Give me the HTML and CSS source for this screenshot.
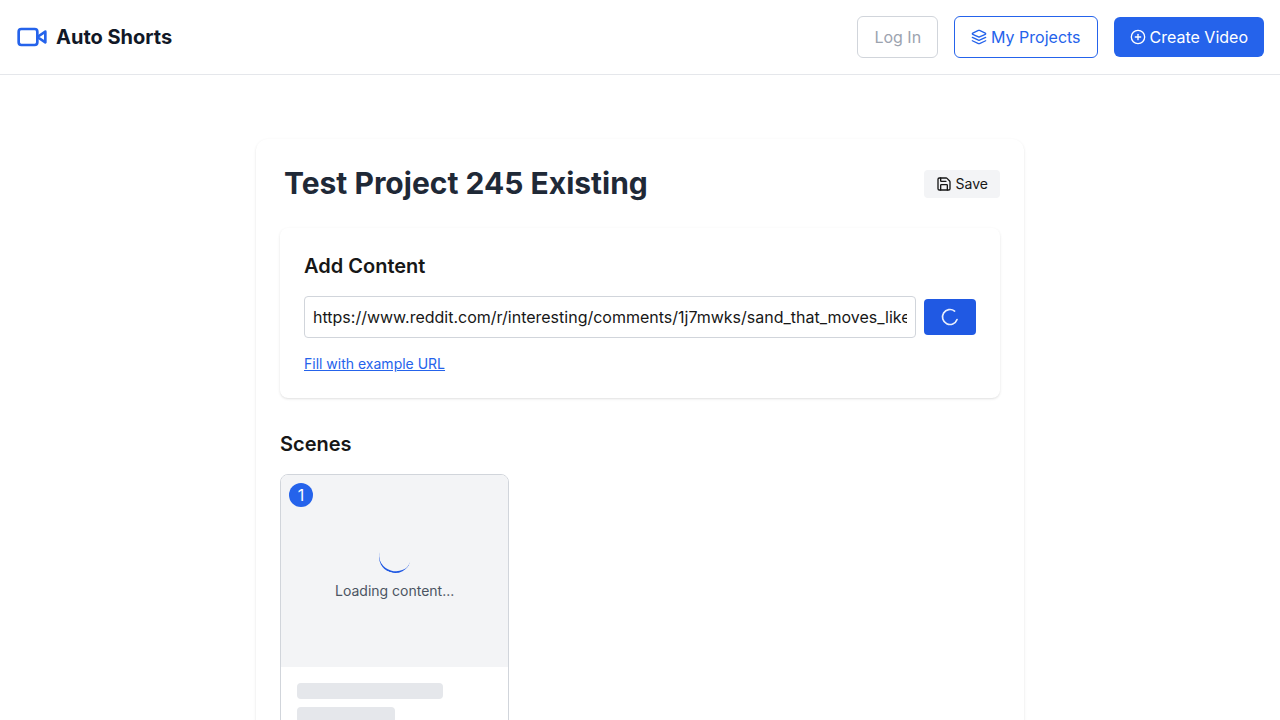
FILE: index.html
```html
<!DOCTYPE html>
<html lang="en">
<head>
<meta charset="utf-8">
<meta name="viewport" content="width=device-width, initial-scale=1">
<title>Auto Shorts</title>
<link rel="stylesheet" href="styles.css">
</head>
<body>
<header class="topbar">
  <a class="brand" href="#">
    <svg class="brand-icon" viewBox="0 0 24 24" aria-hidden="true"><path d="m22 8-6 4 6 4V8Z"/><rect x="2" y="6" width="14" height="12" rx="2"/></svg>
    <span>Auto Shorts</span>
  </a>
  <nav class="nav">
    <button class="btn btn-muted" type="button">Log In</button>
    <a class="btn btn-outline" href="#">
      <svg class="icon" viewBox="0 0 24 24" aria-hidden="true"><path d="m12.83 2.18a2 2 0 0 0-1.66 0L2.6 6.08a1 1 0 0 0 0 1.83l8.58 3.91a2 2 0 0 0 1.66 0l8.58-3.9a1 1 0 0 0 0-1.83Z"/><path d="m22 17.65-9.17 4.16a2 2 0 0 1-1.66 0L2 17.65"/><path d="m22 12.65-9.17 4.16a2 2 0 0 1-1.66 0L2 12.65"/></svg>
      My Projects
    </a>
    <a class="btn btn-primary" href="#">
      <svg class="icon" viewBox="0 0 24 24" aria-hidden="true"><circle cx="12" cy="12" r="10"/><path d="M8 12h8"/><path d="M12 8v8"/></svg>
      Create Video
    </a>
  </nav>
</header>
<main class="page">
  <div class="project">
    <div class="project-head">
      <h1 class="project-title">Test Project 245 Existing</h1>
      <button class="save" type="button">
        <svg class="icon" viewBox="0 0 24 24" aria-hidden="true"><path d="M15.2 3a2 2 0 0 1 1.4.6l3.8 3.8a2 2 0 0 1 .6 1.4V19a2 2 0 0 1-2 2H5a2 2 0 0 1-2-2V5a2 2 0 0 1 2-2z"/><path d="M17 21v-7a1 1 0 0 0-1-1H8a1 1 0 0 0-1 1v7"/><path d="M7 3v4a1 1 0 0 0 1 1h7"/></svg>
        Save
      </button>
    </div>
    <section class="content-box">
      <h2 class="heading">Add Content</h2>
      <form class="url-form">
        <input class="url-input" type="text" aria-label="Content URL" value="https://www.reddit.com/r/interesting/comments/1j7mwks/sand_that_moves_like">
        <button class="submit" type="button" aria-label="Adding content">
          <svg class="loader" viewBox="0 0 24 24" aria-hidden="true"><path d="M21 12a9 9 0 1 1-6.219-8.56"/></svg>
        </button>
      </form>
      <button class="example-link" type="button">Fill with example URL</button>
    </section>
    <section>
      <h2 class="heading">Scenes</h2>
      <div class="scenes">
        <article class="scene">
          <span class="badge">1</span>
          <div class="preview">
            <div class="spinner"></div>
            <p class="status">Loading content...</p>
          </div>
          <div class="skeleton">
            <div class="bar bar-long"></div>
            <div class="bar bar-short"></div>
          </div>
        </article>
      </div>
    </section>
  </div>
</main>
</body>
</html>
```
FILE: styles.css
```css
*, *::before, *::after { box-sizing: border-box; }

html { scrollbar-width: none; }

body {
  margin: 0;
  background: #fff;
  color: #171717;
  font-family: Inter, "Liberation Sans", sans-serif;
  font-size: 16px;
  font-optical-sizing: none;
  line-height: 24px;
}

h1, h2, p { margin: 0; }

a { color: inherit; text-decoration: none; }

button, input { font: inherit; font-optical-sizing: none; color: inherit; }

button {
  border: 0;
  background: none;
  padding: 0;
  cursor: pointer;
}

svg {
  display: block;
  flex: none;
  fill: none;
  stroke: currentColor;
  stroke-width: 2;
  stroke-linecap: round;
  stroke-linejoin: round;
}

.icon { width: 16px; height: 16px; }

.topbar {
  display: flex;
  align-items: center;
  justify-content: space-between;
  padding: 16px;
  border-bottom: 1px solid #e5e7eb;
}

.brand {
  display: flex;
  align-items: center;
  gap: 8px;
  color: #111827;
  font-size: 20px;
  font-weight: 700;
  line-height: 28px;
}

.brand-icon { width: 32px; height: 32px; color: #2563eb; }

.nav { display: flex; align-items: center; gap: 16px; }

.btn {
  display: flex;
  align-items: center;
  gap: 4px;
  padding: 8px 16px;
  border-radius: 6px;
}

.btn-muted { border: 1px solid #d1d5db; color: #9ca3af; }
.btn-outline { border: 1px solid #2563eb; color: #2563eb; }
.btn-primary { background: #2563eb; color: #fff; }

.page { padding: 64px 16px; }

.project {
  max-width: 768px;
  margin: 0 auto;
  padding: 24px;
  border-radius: 12px;
  box-shadow: 0 1px 3px rgba(0, 0, 0, 0.1), 0 1px 2px -1px rgba(0, 0, 0, 0.1);
}

.project-head {
  display: flex;
  align-items: center;
  justify-content: space-between;
  min-height: 41px;
  margin-bottom: 24px;
}

.project-title {
  align-self: flex-start;
  padding: 0 4px;
  color: #1f2937;
  font-size: 30px;
  font-weight: 700;
  line-height: 40px;
}

.save {
  display: flex;
  align-items: center;
  gap: 4px;
  padding: 4px 12px;
  border-radius: 4px;
  background: #f3f4f6;
  font-size: 14px;
  line-height: 20px;
}

.content-box {
  margin-bottom: 32px;
  padding: 24px;
  border-radius: 8px;
  box-shadow: 0 1px 3px rgba(0, 0, 0, 0.1), 0 1px 2px -1px rgba(0, 0, 0, 0.1);
}

.heading {
  margin-bottom: 16px;
  font-size: 20px;
  font-weight: 600;
  line-height: 28px;
}

.url-form {
  display: flex;
  align-items: center;
  gap: 8px;
  margin-bottom: 16px;
}

.url-input {
  flex: 1;
  min-width: 0;
  height: 42px;
  padding: 8px;
  border: 1px solid #d1d5db;
  border-radius: 4px;
  background: #fff;
}

.submit {
  padding: 8px 16px;
  border-radius: 4px;
  background: #2059e3;
  color: #fff;
}

.loader {
  width: 20px;
  height: 20px;
  opacity: 0.9;
  transform: rotate(20deg);
}

.example-link {
  display: block;
  color: #2563eb;
  font-size: 14px;
  line-height: 20px;
  text-decoration: underline;
}

.scenes {
  display: grid;
  grid-template-columns: repeat(3, minmax(0, 1fr));
  gap: 16px;
}

.scene {
  position: relative;
  overflow: hidden;
  border: 1px solid #d1d5db;
  border-radius: 8px;
  background: #fff;
}

.badge {
  position: absolute;
  top: 8px;
  left: 8px;
  width: 24px;
  height: 24px;
  border-radius: 50%;
  background: #2563eb;
  color: #fff;
  text-align: center;
}

.preview {
  display: flex;
  flex-direction: column;
  align-items: center;
  justify-content: center;
  gap: 8px;
  height: 192px;
  background: #f3f4f6;
}

.spinner {
  width: 32px;
  height: 32px;
  border-bottom: 2px solid #2059e3;
  border-radius: 50%;
  transform: rotate(17deg);
}

.status { color: #4b5563; font-size: 14px; line-height: 20px; }

.skeleton { display: grid; gap: 8px; padding: 16px; }

.bar { height: 16px; border-radius: 4px; background: #e5e7eb; }
.bar-long { width: 75%; }
.bar-short { width: 50%; }
```
